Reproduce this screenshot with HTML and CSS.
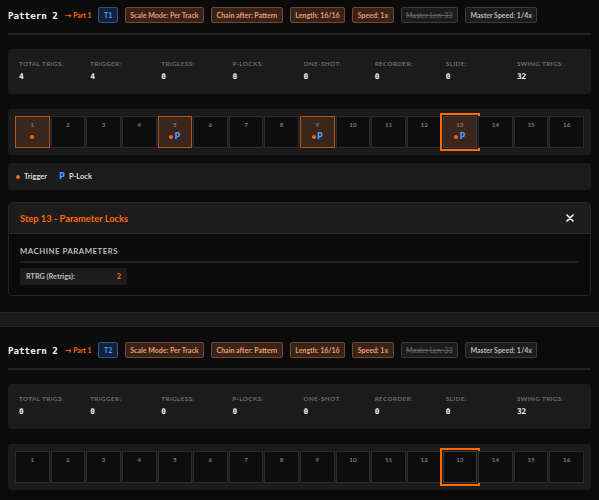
FILE: index.html
```html
<!DOCTYPE html>
<html>
<head>
<meta charset="utf-8">
<title>Pattern 2 - Track view</title>
<link rel="stylesheet" href="styles.css">
</head>
<body>
<div class="page">

<div class="track">
  <div class="track-head">
    <span class="pattern-name">Pattern 2</span>
    <span class="part-link">&#8594; Part 1</span>
    <span class="tag tag-track">T1</span>
    <span class="tag tag-warm">Scale Mode: Per Track</span>
    <span class="tag tag-warm">Chain after: Pattern</span>
    <span class="tag tag-warm">Length: 16/16</span>
    <span class="tag tag-warm">Speed: 1x</span>
    <span class="tag tag-muted tag-off">Master Len: 33</span>
    <span class="tag tag-muted">Master Speed: 1/4x</span>
  </div>

  <div class="stats">
    <div class="stat"><div class="stat-label">Total Trigs:</div><div class="stat-value">4</div></div>
    <div class="stat"><div class="stat-label">Trigger:</div><div class="stat-value">4</div></div>
    <div class="stat"><div class="stat-label">Trigless:</div><div class="stat-value">0</div></div>
    <div class="stat"><div class="stat-label">P-Locks:</div><div class="stat-value">0</div></div>
    <div class="stat"><div class="stat-label">One-Shot:</div><div class="stat-value">0</div></div>
    <div class="stat"><div class="stat-label">Recorder:</div><div class="stat-value">0</div></div>
    <div class="stat"><div class="stat-label">Slide:</div><div class="stat-value">0</div></div>
    <div class="stat"><div class="stat-label">Swing Trigs:</div><div class="stat-value">32</div></div>
  </div>

  <div class="steps">
    <div class="step step-on"><span class="step-nr">1</span><span class="step-marks"><i class="dot"></i></span></div>
    <div class="step"><span class="step-nr">2</span></div>
    <div class="step"><span class="step-nr">3</span></div>
    <div class="step"><span class="step-nr">4</span></div>
    <div class="step step-on"><span class="step-nr">5</span><span class="step-marks"><i class="dot"></i><b class="plock-mark">P</b></span></div>
    <div class="step"><span class="step-nr">6</span></div>
    <div class="step"><span class="step-nr">7</span></div>
    <div class="step"><span class="step-nr">8</span></div>
    <div class="step step-on"><span class="step-nr">9</span><span class="step-marks"><i class="dot"></i><b class="plock-mark">P</b></span></div>
    <div class="step"><span class="step-nr">10</span></div>
    <div class="step"><span class="step-nr">11</span></div>
    <div class="step"><span class="step-nr">12</span></div>
    <div class="step step-on step-sel"><span class="step-nr">13</span><span class="step-marks"><i class="dot"></i><b class="plock-mark">P</b></span></div>
    <div class="step"><span class="step-nr">14</span></div>
    <div class="step"><span class="step-nr">15</span></div>
    <div class="step"><span class="step-nr">16</span></div>
  </div>

  <div class="legend">
    <span class="legend-item"><i class="dot"></i>Trigger</span>
    <span class="legend-item"><b class="plock-mark">P</b>P-Lock</span>
  </div>

  <div class="plock">
    <div class="plock-head">
      <span class="plock-title">Step 13 - Parameter Locks</span>
      <span class="plock-close"><svg width="8" height="8" viewBox="0 0 8 8"><path d="M1 1L7 7M7 1L1 7" stroke="#fff" stroke-width="1.6" stroke-linecap="round"/></svg></span>
    </div>
    <div class="plock-body">
      <div class="plock-group">Machine Parameters</div>
      <div class="plock-param"><span>RTRG (Retrigs):</span><span class="plock-val">2</span></div>
    </div>
  </div>
</div>

<div class="track-sep"></div>

<div class="track">
  <div class="track-head">
    <span class="pattern-name">Pattern 2</span>
    <span class="part-link">&#8594; Part 1</span>
    <span class="tag tag-track">T2</span>
    <span class="tag tag-warm">Scale Mode: Per Track</span>
    <span class="tag tag-warm">Chain after: Pattern</span>
    <span class="tag tag-warm">Length: 16/16</span>
    <span class="tag tag-warm">Speed: 1x</span>
    <span class="tag tag-muted tag-off">Master Len: 33</span>
    <span class="tag tag-muted">Master Speed: 1/4x</span>
  </div>

  <div class="stats">
    <div class="stat"><div class="stat-label">Total Trigs:</div><div class="stat-value">0</div></div>
    <div class="stat"><div class="stat-label">Trigger:</div><div class="stat-value">0</div></div>
    <div class="stat"><div class="stat-label">Trigless:</div><div class="stat-value">0</div></div>
    <div class="stat"><div class="stat-label">P-Locks:</div><div class="stat-value">0</div></div>
    <div class="stat"><div class="stat-label">One-Shot:</div><div class="stat-value">0</div></div>
    <div class="stat"><div class="stat-label">Recorder:</div><div class="stat-value">0</div></div>
    <div class="stat"><div class="stat-label">Slide:</div><div class="stat-value">0</div></div>
    <div class="stat"><div class="stat-label">Swing Trigs:</div><div class="stat-value">32</div></div>
  </div>

  <div class="steps">
    <div class="step"><span class="step-nr">1</span></div>
    <div class="step"><span class="step-nr">2</span></div>
    <div class="step"><span class="step-nr">3</span></div>
    <div class="step"><span class="step-nr">4</span></div>
    <div class="step"><span class="step-nr">5</span></div>
    <div class="step"><span class="step-nr">6</span></div>
    <div class="step"><span class="step-nr">7</span></div>
    <div class="step"><span class="step-nr">8</span></div>
    <div class="step"><span class="step-nr">9</span></div>
    <div class="step"><span class="step-nr">10</span></div>
    <div class="step"><span class="step-nr">11</span></div>
    <div class="step"><span class="step-nr">12</span></div>
    <div class="step step-sel"><span class="step-nr">13</span></div>
    <div class="step"><span class="step-nr">14</span></div>
    <div class="step"><span class="step-nr">15</span></div>
    <div class="step"><span class="step-nr">16</span></div>
  </div>
</div>

</div>
</body>
</html>
```

FILE: styles.css
```css
/* Track view, dark theme */

body
{ margin: 0;
  background-color: #0b0b0b;
  color: #ddd;
  font-family: Lato, "Noto Sans", sans-serif;
}

div.page
{ padding: 0 8px;
}

/* Header row */

div.track-head
{ display: flex;
  align-items: center;
  gap: 7px;
  padding: 7px 0 10px 0;
  border-bottom: 2px solid #222;
}

span.pattern-name
{ font-family: "DejaVu Sans Mono", monospace;
  font-weight: bold;
  font-size: 9.2px;
  color: #f2f2f2;
}

span.part-link
{ font-size: 6.8px;
  font-weight: bold;
  color: #ff6a00;
}

span.tag
{ display: inline-block;
  height: 14px;
  line-height: 14px;
  padding: 0 4.5px;
  border: 1px solid;
  border-radius: 2px;
  font-size: 7px;
  font-weight: bold;
  white-space: nowrap;
}

span.tag-track
{ background-color: #10233a;
  border-color: #2b5786;
  color: #4a9eff;
}

span.tag-warm
{ background-color: #36231a;
  border-color: #7b4527;
  color: #f0996a;
}

span.tag-muted
{ background-color: #1c1c1c;
  border-color: #3a3a3a;
  color: #b8b8b8;
}

span.tag-off
{ color: #5e5e5e;
  text-decoration: line-through;
}

/* Stats */

div.stats
{ margin-top: 14px;
  display: grid;
  grid-template-columns: repeat(8, 1fr);
  gap: 8px;
  padding: 11px 11px 12px 11px;
  background-color: #1b1b1b;
  border-radius: 3px;
}

div.stat-label
{ font-size: 6.3px;
  line-height: 8px;
  font-weight: bold;
  letter-spacing: 0.4px;
  text-transform: uppercase;
  color: #6c6c6c;
  white-space: nowrap;
}

div.stat-value
{ margin-top: 3px;
  font-family: "DejaVu Sans Mono", monospace;
  font-weight: bold;
  font-size: 7.8px;
  line-height: 11px;
  color: #f4f4f4;
}

/* Step grid */

div.steps
{ margin-top: 15px;
  display: grid;
  grid-template-columns: repeat(16, 1fr);
  gap: 1px;
  padding: 7px;
  background-color: #1b1b1b;
  border-radius: 3px;
}

div.step
{ height: 27px;
  display: flex;
  flex-direction: column;
  align-items: center;
  padding-top: 3px;
  box-sizing: content-box;
  background-color: #0d0d0d;
  border: 1px solid #2b2b2b;
}

div.step-on
{ background-color: #3a261c;
  border-color: #b0561c;
}

div.step-sel
{ outline: 2px solid #ff6a00;
  outline-offset: 1px;
  border-color: #3a3a3a;
}

span.step-nr
{ font-size: 6.3px;
  line-height: 9px;
  font-weight: bold;
  color: #7a7a7a;
}

span.step-marks
{ display: flex;
  align-items: center;
  gap: 1px;
  margin-top: 3px;
  height: 9px;
}

i.dot
{ display: inline-block;
  width: 4px;
  height: 4px;
  border-radius: 50%;
  background-color: #ff6a00;
}

b.plock-mark
{ font-family: "DejaVu Sans", sans-serif;
  font-size: 8px;
  line-height: 9px;
  font-weight: bold;
  color: #4a9eff;
}

/* Legend */

div.legend
{ margin-top: 8px;
  height: 27px;
  display: flex;
  align-items: center;
  gap: 12px;
  padding: 0 8px;
  background-color: #1b1b1b;
  border-radius: 3px;
}

span.legend-item
{ display: flex;
  align-items: center;
  gap: 4px;
  font-size: 7.5px;
  font-weight: bold;
  color: #dedede;
}

/* Parameter lock panel */

div.plock
{ margin-top: 12px;
  border: 1px solid #262626;
  border-radius: 4px;
  overflow: hidden;
}

div.plock-head
{ height: 30px;
  display: flex;
  align-items: center;
  justify-content: space-between;
  padding: 0 11px 0 11px;
  background-color: #1c1c1c;
  border-bottom: 1px solid #2a2a2a;
}

span.plock-title
{ font-size: 9.3px;
  font-weight: bold;
  color: #ff6a00;
}

span.plock-close
{ display: flex;
  padding-right: 5px;
}

div.plock-body
{ padding: 12px 11px 10px 11px;
  background-color: #0b0b0b;
}

div.plock-group
{ font-size: 7.8px;
  line-height: 10px;
  font-weight: bold;
  letter-spacing: 0.5px;
  text-transform: uppercase;
  color: #bdbdbd;
  padding-bottom: 5px;
  border-bottom: 2px solid #222;
}

div.plock-param
{ margin-top: 5px;
  width: 95px;
  height: 17px;
  display: flex;
  align-items: center;
  justify-content: space-between;
  padding: 0 6px;
  background-color: #1c1c1c;
  border-radius: 2px;
  font-size: 7.3px;
  font-weight: bold;
  color: #bdbdbd;
}

span.plock-val
{ color: #ff6a00;
}

/* Separator between tracks */

div.track-sep
{ margin: 16px -8px 8px -8px;
  height: 13px;
  background-color: #1a1a1a;
  border-top: 1px solid #262626;
  border-bottom: 1px solid #262626;
}
```
